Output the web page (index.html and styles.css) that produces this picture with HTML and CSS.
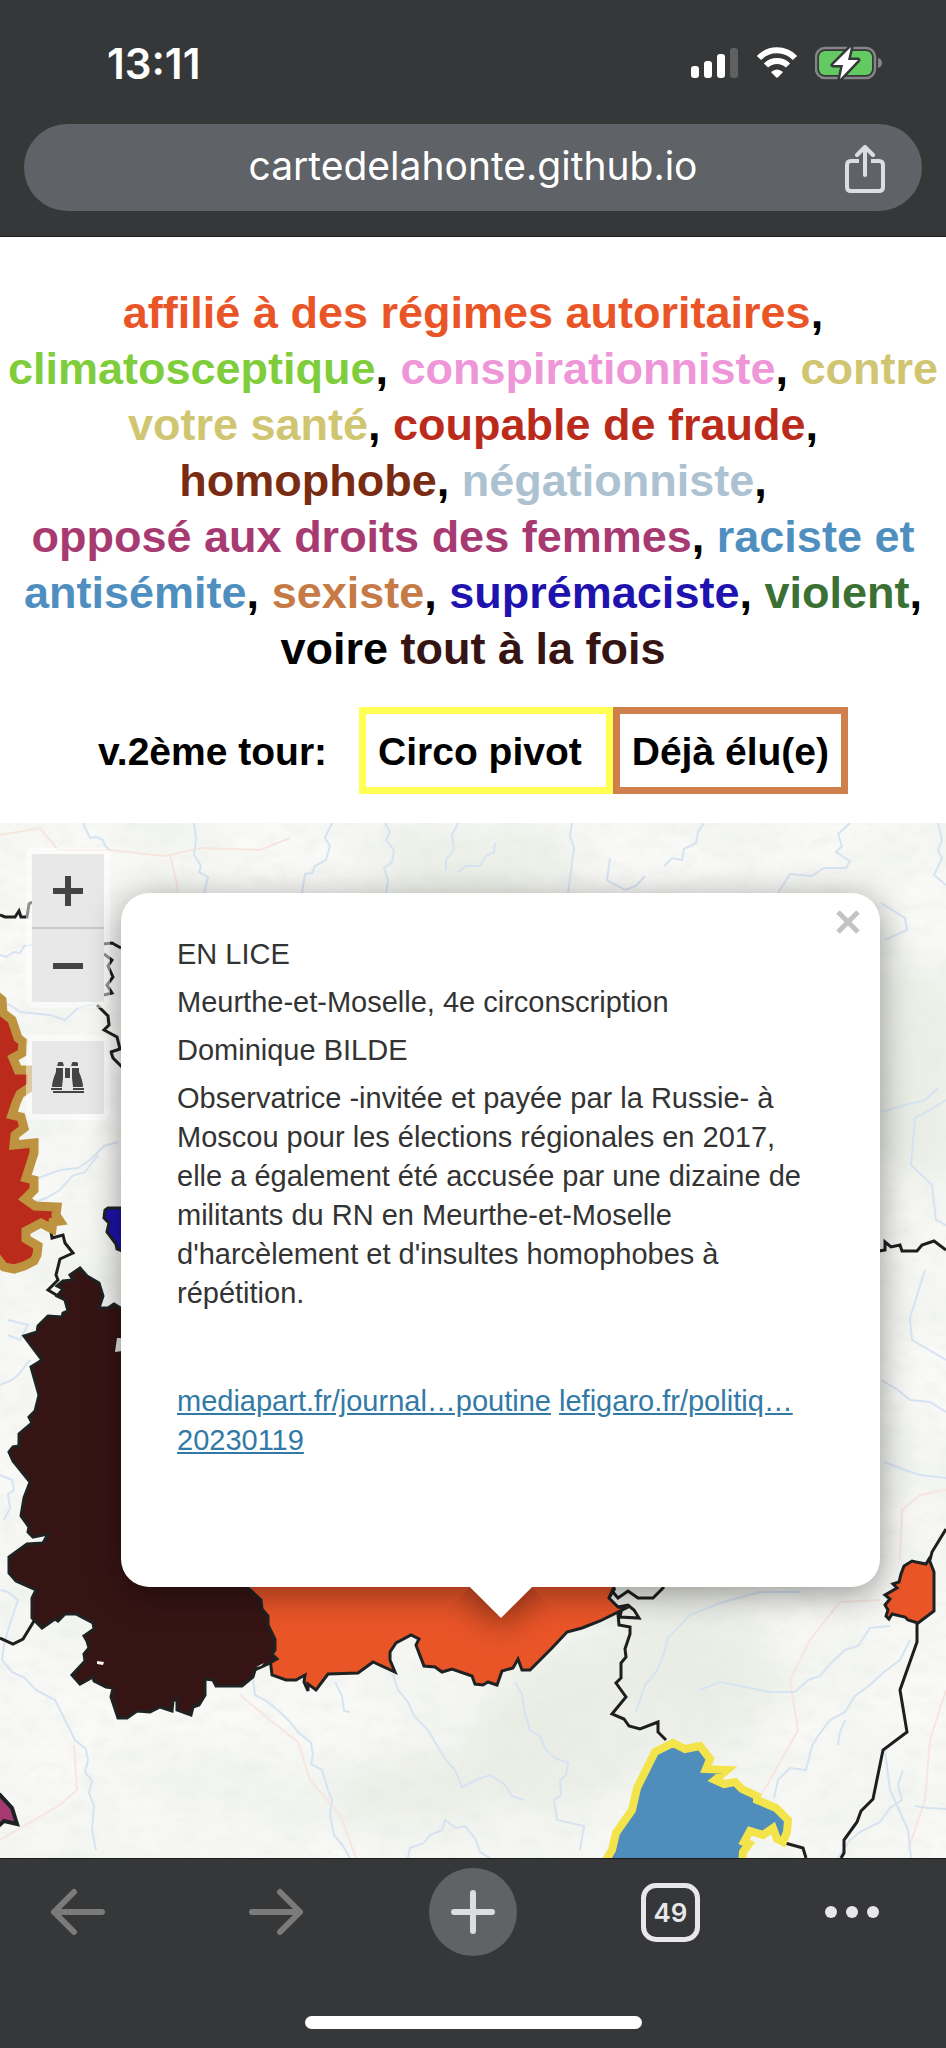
FILE: index.html
```html
<!DOCTYPE html>
<html lang="fr">
<head>
    <meta charset="UTF-8">
    <meta name="viewport" content="width=device-width, initial-scale=1.0">
    <title>Carte de la honte</title>
    <link rel="stylesheet" href="styles.css">
</head>
<body>
    <header class="browser-top">
        <div class="status-bar">
            <span class="time">13:11</span>
            <div class="status-icons">
                <svg class="signal" width="48" height="32" viewBox="0 0 48 32">
                    <rect x="0" y="19" width="8" height="12" rx="3" fill="#fff"/>
                    <rect x="13" y="14" width="8" height="17" rx="3" fill="#fff"/>
                    <rect x="26" y="7" width="8" height="24" rx="3" fill="#fff"/>
                    <rect x="39" y="1" width="8" height="30" rx="3" fill="#5f6062"/>
                </svg>
                <svg class="wifi" width="42" height="32" viewBox="0 0 42 32">
                    <path d="M3 11A25 25 0 0 1 39 11" fill="none" stroke="#fff" stroke-width="6"/>
                    <path d="M10 18.500A15.500 15.500 0 0 1 32 18.500" fill="none" stroke="#fff" stroke-width="6"/>
                    <path d="M15 25Q21 20 27 25L22 30.300Q21 31 20 30.300Z" fill="#fff"/>
                </svg>
                <svg class="battery" width="68" height="34" viewBox="0 0 68 34">
                    <rect x="1" y="2" width="59" height="30" rx="9" fill="none" stroke="#858588" stroke-width="2.500"/>
                    <rect x="4" y="5" width="53" height="24" rx="6" fill="#63ca62"/>
                    <path d="M63 12Q67 13 67 17T63 22Z" fill="#858588"/>
                    <path d="M36 1L18 19H28L25 33L43 14H33Z" fill="#fff" stroke="#363738" stroke-width="5" stroke-linejoin="round" paint-order="stroke"/>
                </svg>
            </div>
        </div>
        <div class="url-bar">
            <span class="url">cartedelahonte.github.io</span>
            <button class="share-button" aria-label="Partager">
                <svg width="42" height="50" viewBox="0 0 42 50" fill="none" stroke="#dcdde1" stroke-width="4" stroke-linecap="round" stroke-linejoin="round">
                    <path stroke-linecap="butt" d="M15 16H7Q3 16 3 20V42Q3 46 7 46H35Q39 46 39 42V20Q39 16 35 16H27"/>
                    <path d="M21 30V3M13 10L21 2L29 10"/>
                </svg>
            </button>
        </div>
    </header>

    <main class="page">
        <h1 class="title">
            <span class="autoritaire">affilié à des régimes autoritaires</span>,
            <span class="climato">climatosceptique</span>,
            <span class="conspi">conspirationniste</span>,
            <span class="sante">contre votre santé</span>,
            <span class="fraude">coupable de fraude</span>,
            <span class="homophobe">homophobe</span>,
            <span class="negation">négationniste</span>,
            <span class="femmes">opposé aux droits des femmes</span>,
            <span class="raciste">raciste et antisémite</span>,
            <span class="sexiste">sexiste</span>,
            <span class="supremaciste">suprémaciste</span>,
            <span class="violent">violent</span>,
            voire <span class="tout">tout à la fois</span>
        </h1>

        <div class="legend">
            <span class="legend-label">v.2ème tour:</span>
            <span class="legend-box pivot">Circo pivot</span>
            <span class="legend-box elu">Déjà élu(e)</span>
        </div>

        <div class="map">
            <svg class="map-canvas" viewBox="0 823 946 1035" preserveAspectRatio="xMidYMin slice">
                <defs>
                    <filter id="terrain" x="0" y="0" width="100%" height="100%">
                        <feTurbulence type="fractalNoise" baseFrequency="0.009 0.012" numOctaves="4" seed="11"/>
                        <feColorMatrix values="0 0 0 0 0.88  0 0 0 0 0.905  0 0 0 0 0.86  2.6 0 0 0 -0.9"/>
                    </filter>
                    <filter id="relief" x="0" y="0" width="100%" height="100%">
                        <feTurbulence type="fractalNoise" baseFrequency="0.05 0.08" numOctaves="3" seed="4"/>
                        <feColorMatrix values="0 0 0 0 0.8  0 0 0 0 0.83  0 0 0 0 0.78  0 1.4 0 0 -0.6"/>
                    </filter>
                    <filter id="soft">
                        <feGaussianBlur stdDeviation="22"/>
                    </filter>
                </defs>

                <!-- relief -->
                <rect y="823" width="946" height="1035" fill="#f9f9f7"/>
                <rect y="823" width="946" height="1035" filter="url(#terrain)" opacity="0.8"/>
                <rect y="823" width="946" height="1035" filter="url(#relief)" opacity="0.6"/>
                <g class="forest" filter="url(#soft)">
                    <ellipse cx="910" cy="1070" rx="50" ry="110"/>
                    <ellipse cx="690" cy="1670" rx="90" ry="90"/>
                    <ellipse cx="560" cy="1730" rx="80" ry="90"/>
                    <ellipse cx="430" cy="1790" rx="90" ry="40"/>
                    <ellipse cx="470" cy="860" rx="120" ry="26"/>
                </g>

                <!-- roads -->
                <g class="roads">
                    <path d="M0 835L40 828L58 850L110 850L165 856L200 848L260 850L290 838"/>
                    <path d="M170 855L176 880L178 893"/>
                    <path d="M240 1695L270 1720L298 1742L310 1780L340 1815L356 1858"/>
                    <path d="M880 1600L840 1602L810 1640L790 1680L798 1730L770 1780L758 1800"/>
                    <path d="M946 1690L930 1740L925 1800L908 1850"/>
                    <path d="M0 1840L60 1805L77 1790L74 1745"/>
                    <path d="M900 1560L902 1510L920 1495L946 1490"/>
                </g>

                <!-- rivers -->
                <g class="rivers">
                    <path d="M83 823L90 838L96 837L103 840L105 846L110 850"/>
                    <path d="M194 823L196 838L194 855L201 866L199 872L208 877L204 893"/>
                    <path d="M332 823L325 838L330 846L326 860L315 866L312 873L305 874L302 893"/>
                    <path d="M385 823L390 832L386 840L394 850L392 862L384 868L388 880L386 893"/>
                    <path d="M458 823L452 835L454 850L446 860L446 871M495 843L494 852L486 856L480 866L466 866L458 872"/>
                    <path d="M572 823L570 836L574 848L568 893"/>
                    <path d="M704 823L698 832L696 843L684 849L682 860L672 858L664 866M610 858L607 880L625 890L636 886L645 876"/>
                    <path d="M850 823L838 834L842 846L836 852L850 861L846 868L824 868L812 876L790 874L778 893"/>
                    <path d="M938 823L942 840L938 850L942 858L934 875L946 885"/>
                    <path d="M881 903L905 918L907 930L885 940"/>
                    <path d="M0 955L6 957L14 952L20 953L24 946L32 945"/>
                    <path d="M5 1003L12 1006L20 1012L50 1015L65 1020L78 1008L95 1004"/>
                    <path d="M118 1142L104 1146L90 1160L78 1168L60 1170L38 1178M35 1202L46 1198L60 1190L72 1176L85 1172L98 1155"/>
                    <path d="M8 1320L28 1325L20 1340L8 1335M0 1385L12 1380L18 1375L30 1360"/>
                    <path d="M0 1475L12 1480L14 1490L8 1494L10 1508L4 1520M0 1590L8 1592L18 1600L14 1612L8 1630L4 1645L2 1660L12 1672L25 1678L36 1690L55 1700L64 1718L75 1740L86 1749L88 1760L85 1772L92 1781L89 1793L94 1806L92 1830L96 1850"/>
                    <path d="M253 1678L255 1695L265 1700L280 1712L290 1722L298 1732L311 1743L313 1755L311 1764L322 1770L328 1790L332 1800L330 1815L334 1835L343 1846L350 1858"/>
                    <path d="M335 1682L342 1696L344 1711L350 1712"/>
                    <path d="M393 1674L398 1690L408 1702L414 1716L428 1730L436 1744L446 1760L455 1770L462 1787L476 1780L490 1775L504 1784L512 1796L524 1800"/>
                    <path d="M515 1682L522 1694L524 1710L530 1730L540 1736L546 1750L555 1758L568 1763L566 1775L560 1780L561 1795L554 1800L557 1820L584 1826L580 1850"/>
                    <path d="M408 1858L410 1848L424 1843L430 1835L442 1830L445 1820L456 1828L465 1826L476 1840L480 1852L490 1858"/>
                    <path d="M636 1712L645 1685L656 1672L662 1660L668 1638L690 1615L720 1603L760 1592L800 1592"/>
                    <path d="M700 1690L720 1682L740 1686L770 1692L795 1692L808 1680L820 1676L832 1662L845 1650L858 1646L870 1628L890 1626"/>
                    <path d="M910 1640L900 1660L884 1672L870 1685L855 1696L845 1712L830 1720L818 1736L812 1746L806 1770L790 1768L778 1780L774 1798"/>
                    <path d="M885 1750L890 1790L900 1812L908 1830L911 1858M903 1770L898 1785L902 1800L890 1808L880 1822L860 1832L850 1840L838 1858"/>
                    <path d="M915 1806L928 1808L946 1809M838 1745L840 1732L845 1720"/>
                    <path d="M881 1112L905 1105L925 1100L938 1088M946 1100L930 1110L915 1118L911 1165L932 1185L936 1220L946 1225"/>
                    <path d="M925 1270L910 1318L912 1340L946 1360M881 1380L898 1390L910 1400L930 1402L946 1412M884 1462L905 1470L920 1475L946 1478"/>
                </g>

                <!-- département borders -->
                <g class="borders">
                    <path d="M0 915L5 917L15 917L19 911L21 917L27 917L29 904L32 902"/>
                    <path d="M103 944L112 943L121 948M104 954L112 960L108 966L113 977L107 985L112 993L104 995"/>
                    <path d="M97 1005L108 1016L109 1025L104 1030L117 1037L120 1049L111 1052L113 1058L122 1067"/>
                    <path d="M51 1232L52 1238L63 1235L65 1243L73 1253L60 1259L56 1275L58 1280L48 1290L58 1296L66 1290"/>
                    <path d="M34 1621L23 1639L13 1644L0 1638"/>
                    <path d="M605 1590L612 1591L618 1598L628 1591L638 1598L653 1598L664 1587"/>
                    <path d="M615 1588L609 1598L611 1604L618 1607L628 1605L634 1610L639 1618L620 1617L621 1612L618 1614L619 1625L630 1627L630 1634L625 1649L626 1657L621 1663L621 1678L616 1683L626 1697L612 1714L624 1719L629 1726L640 1729L658 1722L658 1732L666 1740"/>
                    <path d="M785 1843L803 1848L806 1858"/>
                    <path d="M917 1621L917 1642L900 1690L907 1732L883 1750L873 1799L861 1811L857 1822L844 1840L844 1853L841 1858"/>
                    <path d="M930 1560L932 1552L946 1529"/>
                    <path d="M879 1251L885 1250L885 1242L891 1247L900 1245L902 1251L917 1251L922 1245L934 1241L946 1250"/>
                </g>

                <!-- circonscriptions -->
                <path class="circo orange" d="M200 1480L620 1480L614 1587L609 1598L618 1607L626 1608L600 1621L582 1628L567 1632L552 1648L530 1670L522 1670L518 1659L513 1668L502 1671L497 1685L488 1682L483 1685L475 1684L472 1676L452 1669L442 1672L435 1667L424 1666L416 1645L419 1639L411 1635L396 1643L390 1652L390 1660L395 1672L373 1662L358 1673L328 1674L316 1690L308 1684L308 1691L304 1682L305 1675L296 1680L286 1680L272 1675L269 1650L230 1600Z"/>
                <path class="circo maroon" d="M80 1268L87 1276L99 1283L103 1296L99 1308L108 1308L114 1304L122 1309L150 1480L247 1587L261 1600L262 1609L268 1616L268 1625L275 1639L275 1650L272 1654L277 1659L268 1664L255 1670L253 1677L242 1686L216 1686L213 1680L205 1679L205 1695L199 1705L193 1707L191 1715L177 1710L177 1699L173 1701L172 1711L160 1707L150 1712L137 1711L127 1718L118 1718L111 1697L113 1688L106 1687L94 1681L93 1677L80 1684L72 1675L85 1661L84 1654L89 1648L87 1641L84 1636L94 1629L93 1623L76 1614L65 1614L58 1621L55 1619L42 1628L32 1618L32 1598L36 1590L16 1581L9 1573L9 1557L27 1544L43 1543L48 1534L33 1537L28 1532L29 1527L21 1516L24 1498L30 1482L13 1461L9 1452L13 1447L19 1446L19 1434L32 1423L29 1417L35 1411L39 1395L31 1367L42 1360L24 1336L37 1332L38 1326L48 1316L62 1317L63 1313L68 1311L65 1300L57 1296L63 1289L57 1286L63 1281L73 1280L70 1275Z"/>
                <path d="M117 1338L122 1338L122 1351L115 1352Z" fill="#e4e5e1"/>
                <path d="M97 1661L104 1662L103 1665L97 1664ZM256 1667L264 1663L261 1666Z" fill="#f6f6f4"/>
                <path class="circo blue" d="M130 1208L108 1208L105 1210L104 1218L109 1223L107 1232L116 1244L117 1249L130 1254Z"/>
                <path class="circo small-orange" d="M904 1566L912 1561L916 1562L926 1564L929 1559L934 1572L934 1611L918 1623L908 1620L905 1617L892 1614L889 1619L886 1616L888 1610L885 1605L890 1599L885 1595L897 1588L893 1584L899 1582L901 1574Z"/>
                <path class="circo magenta" d="M-6 1790L0 1795L12 1808L17 1824L4 1821L-6 1830Z"/>
                <path class="circo red" d="M-10 990L2 1000L3 1013L12 1020L18 1038L23 1042L22 1053L13 1058L18 1070L32 1070L32 1086L20 1094L16 1103L12 1115L21 1117L24 1128L15 1135L14 1145L34 1143L34 1153L26 1178L34 1180L34 1190L25 1199L35 1206L57 1207L56 1215L60 1221L53 1222L52 1229L41 1223L26 1231L26 1239L38 1246L37 1255L34 1261L24 1266L14 1269L4 1267L-10 1249Z"/>
                <path class="circo pale-blue" d="M603 1865L612 1850L616 1833L632 1810L637 1788L655 1752L673 1743L685 1749L700 1746L710 1759L706 1769L727 1770L715 1780L724 1784L735 1782L742 1789L757 1796L757 1800L776 1808L788 1820L787 1832L783 1842L777 1839L773 1828L763 1835L750 1831L744 1842L749 1844L743 1852L742 1865Z"/>
            </svg>

            <div class="controls">
                <div class="control-group">
                    <button class="control" aria-label="Zoom avant">
                        <svg width="30" height="30" viewBox="0 0 30 30"><path d="M0 15H30M15 0V30" stroke="#444" stroke-width="6"/></svg>
                    </button>
                    <button class="control" aria-label="Zoom arrière">
                        <svg width="30" height="30" viewBox="0 0 30 30"><path d="M0 15H30" stroke="#444" stroke-width="6"/></svg>
                    </button>
                </div>
                <div class="control-group">
                    <button class="control" aria-label="Rechercher">
                        <svg width="34" height="32" viewBox="0 0 34 32" fill="#444">
                            <path d="M7 1Q7 0 8 0H11Q12 0 12 1L13 4H6ZM21 1Q21 0 22 0H25Q26 0 27 1L27 4H20Z"/>
                            <path d="M5 6H12V16L11 25H1Q1 19 5 10ZM14 6H19V16H14ZM21 6H28V10Q32 19 32 25H22L21 16Z"/>
                            <path d="M0 26H11V28H0ZM22 26H33V28H22ZM2 29H33V31H2Z"/>
                        </svg>
                    </button>
                </div>
            </div>

            <div class="popup">
                <button class="popup-close" aria-label="Fermer">
                    <svg width="24" height="24" viewBox="0 0 24 24"><path d="M2 2L22 22M22 2L2 22" stroke="#c3c3c3" stroke-width="5"/></svg>
                </button>
                <p>EN LICE</p>
                <p>Meurthe-et-Moselle, 4e circonscription</p>
                <p>Dominique BILDE</p>
                <p>Observatrice -invitée et payée par la Russie- à Moscou pour les élections régionales en 2017, elle a également été accusée par une dizaine de militants du RN en Meurthe-et-Moselle d'harcèlement et d'insultes homophobes à répétition.</p>
                <p class="sources">
                    <a href="#">mediapart.fr/journal…poutine</a>
                    <a href="#">lefigaro.fr/politiq…<wbr>20230119</a>
                </p>
            </div>
        </div>
    </main>

    <footer class="browser-bottom">
        <nav class="toolbar">
            <button class="tool" aria-label="Précédent">
                <svg width="56" height="48" viewBox="0 0 56 48" fill="none" stroke="#7b7b7c" stroke-width="6" stroke-linecap="round" stroke-linejoin="round"><path d="M52 24H4M24 4L4 24L24 44"/></svg>
            </button>
            <button class="tool" aria-label="Suivant">
                <svg width="56" height="48" viewBox="0 0 56 48" fill="none" stroke="#7b7b7c" stroke-width="6" stroke-linecap="round" stroke-linejoin="round"><path d="M4 24H52M32 4L52 24L32 44"/></svg>
            </button>
            <button class="tool new-tab" aria-label="Nouvel onglet">
                <svg width="46" height="46" viewBox="0 0 46 46" stroke="#dcdde1" stroke-width="6" stroke-linecap="round"><path d="M4 23H42M23 4V42"/></svg>
            </button>
            <button class="tool" aria-label="Onglets">
                <span class="tab-count">49</span>
            </button>
            <button class="tool menu" aria-label="Menu">
                <svg width="56" height="14" viewBox="0 0 56 14" fill="#e8e8eb"><circle cx="7" cy="7" r="6"/><circle cx="28" cy="7" r="6"/><circle cx="49" cy="7" r="6"/></svg>
            </button>
        </nav>
        <div class="home-indicator"></div>
    </footer>
</body>
</html>
```

FILE: styles.css
```css
* {
    box-sizing: border-box;
}

body {
    margin: 0;
    min-height: 100vh;
    display: flex;
    flex-direction: column;
    font-family: 'Liberation Sans', Helvetica, Arial, sans-serif;
    background-color: white;
}

button {
    display: flex;
    align-items: center;
    justify-content: center;
    padding: 0;
    border: none;
    background: none;
    font-family: inherit;
    cursor: pointer;
}

svg {
    display: block;
}

/* Browser top */
.browser-top {
    background-color: #363738;
    border-bottom: 1px solid #1c1c1c;
    padding: 35px 24px 25px;
    font-family: Inter, sans-serif;
    color: white;
}

.status-bar {
    display: flex;
    justify-content: space-between;
    align-items: center;
    height: 56px;
    padding: 0 39px 0 83px;
    margin-bottom: 33px;
}

.time {
    font-size: 42px;
    font-weight: 600;
}

.status-icons {
    display: flex;
    align-items: center;
    gap: 17px;
}

.url-bar {
    display: flex;
    align-items: center;
    justify-content: center;
    position: relative;
    height: 87px;
    border-radius: 44px;
    background-color: #5f6266;
}

.url {
    font-size: 39px;
    line-height: 44px;
    padding-bottom: 4px;
}

.share-button {
    position: absolute;
    right: 36px;
    top: 21px;
}

/* Page */
.page {
    flex: 1;
    display: flex;
    flex-direction: column;
}

.title {
    margin: 0;
    padding-top: 48px;
    font-size: 45px;
    line-height: 56px;
    text-align: center;
    color: black;
}

.autoritaire { color: #ea5528; }
.climato { color: #80cd3c; }
.conspi { color: #ee96d8; }
.sante { color: #d0c570; }
.fraude { color: #bb2b1b; }
.homophobe { color: #7a2c12; }
.negation { color: #adc2d1; }
.femmes { color: #a83a72; white-space: nowrap; }
.raciste { color: #4f8fc0; }
.sexiste { color: #c67a45; }
.supremaciste { color: #1f13b0; }
.violent { color: #3a7034; }
.tout { color: #361414; }

.legend {
    display: flex;
    justify-content: center;
    align-items: center;
    margin: 30px 0 29px;
    font-size: 39px;
    font-weight: bold;
    line-height: 43px;
}

.legend-label {
    padding-top: 2px;
    margin-right: 32px;
}

.legend-box {
    padding: 16px 12px 14px;
    border: 7px solid;
}

.pivot {
    padding-right: 24px;
    border-color: #ffff54;
}

.elu {
    border-color: #cf804d;
}

/* Map */
.map {
    flex: 1;
    position: relative;
    min-height: 900px;
    overflow: hidden;
    background-color: #f6f6f4;
}

.map-canvas {
    position: absolute;
    width: 100%;
    height: 100%;
}

.forest {
    fill: #e3e8dd;
    opacity: 0.6;
}

.roads path {
    fill: none;
    stroke: #f7e5df;
    stroke-width: 2;
}

.rivers path {
    fill: none;
    stroke: #d6e3f1;
    stroke-width: 2;
}

.borders path {
    fill: none;
    stroke: #1e1e1e;
    stroke-width: 3;
}

.circo {
    stroke: #1e2222;
    stroke-width: 3;
}

.orange,
.small-orange { fill: #ea5528; }
.maroon { fill: #361414; }
.blue { fill: #1c13a8; }
.magenta { fill: #a83a72; stroke-width: 4; }
.red { fill: #bb2b1b; stroke: #bd9340; stroke-width: 9; }
.pale-blue { fill: #4f8dbd; stroke: #f4e44c; stroke-width: 8; }

.controls {
    position: absolute;
    left: 26px;
    top: 25px;
    display: flex;
    flex-direction: column;
    gap: 27px;
}

.control-group {
    border: 6px solid rgba(255, 255, 255, 0.5);
    border-radius: 8px;
    background-clip: padding-box;
    background-color: #e8e8e8;
}

.control {
    width: 72px;
    height: 73px;
}

.control + .control {
    height: 75px;
    border-top: 2px solid #c8c8c8;
}

.popup {
    position: absolute;
    left: 121px;
    right: 66px;
    top: 70px;
    padding: 42px 56px 127px;
    border-radius: 28px;
    background-color: white;
    box-shadow: 0 7px 34px rgba(0, 0, 0, 0.4);
    font-size: 29px;
    line-height: 39px;
    color: #333;
}

/* popup tip */
.popup::after {
    content: '';
    position: absolute;
    left: 50%;
    bottom: -22px;
    width: 44px;
    height: 44px;
    margin-left: -22px;
    transform: rotate(45deg);
    background-color: white;
    box-shadow: 7px 7px 34px rgba(0, 0, 0, 0.4);
    clip-path: polygon(100% 0, 200% 0, 200% 200%, 0 200%, 0 100%);
}

.popup p {
    margin: 0 0 9px;
}

.popup .sources {
    margin: 69px 0 0;
}

.popup a {
    color: #327aa5;
}

.popup-close {
    position: absolute;
    right: 20px;
    top: 17px;
}

/* Browser bottom */
.browser-bottom {
    background-color: #363738;
    border-top: 1px solid #1c1c1c;
    padding: 9px 0 19px;
}

.toolbar {
    display: flex;
    justify-content: space-between;
    align-items: center;
    padding: 0 66px 0 34px;
    margin-bottom: 60px;
}

.tool {
    width: 88px;
    height: 88px;
}

.new-tab {
    border-radius: 50%;
    background-color: #5f6366;
}

.tab-count {
    width: 59px;
    height: 59px;
    border: 5px solid #e8e8eb;
    border-radius: 15px;
    font-family: Inter, sans-serif;
    font-size: 26px;
    font-weight: 600;
    line-height: 49px;
    color: #e8e8eb;
}

.menu {
    width: 56px;
}

.home-indicator {
    width: 337px;
    height: 13px;
    margin: 0 auto;
    border-radius: 7px;
    background-color: white;
}
```
